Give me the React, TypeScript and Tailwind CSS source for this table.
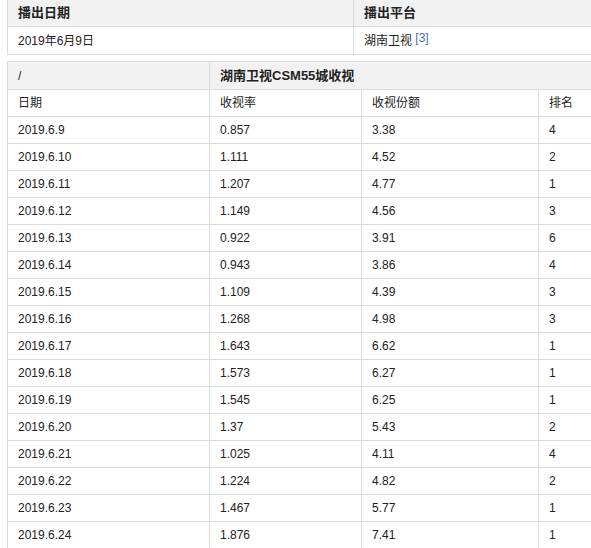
import React from 'react';

const rows: [string, string, string, string][] = [
    ['2019.6.9', '0.857', '3.38', '4'],
    ['2019.6.10', '1.111', '4.52', '2'],
    ['2019.6.11', '1.207', '4.77', '1'],
    ['2019.6.12', '1.149', '4.56', '3'],
    ['2019.6.13', '0.922', '3.91', '6'],
    ['2019.6.14', '0.943', '3.86', '4'],
    ['2019.6.15', '1.109', '4.39', '3'],
    ['2019.6.16', '1.268', '4.98', '3'],
    ['2019.6.17', '1.643', '6.62', '1'],
    ['2019.6.18', '1.573', '6.27', '1'],
    ['2019.6.19', '1.545', '6.25', '1'],
    ['2019.6.20', '1.37', '5.43', '2'],
    ['2019.6.21', '1.025', '4.11', '4'],
    ['2019.6.22', '1.224', '4.82', '2'],
    ['2019.6.23', '1.467', '5.77', '1'],
    ['2019.6.24', '1.876', '7.41', '1'],
];

const cell = 'border border-[#dcdcdc] px-[10px] py-0 text-left align-middle';

export default function App() {
    return (
        <div
            className="w-[591px] h-[548px] overflow-hidden bg-white text-[12px] text-[#222]"
            style={{ fontFamily: '"Liberation Sans", Arial, "Noto Sans CJK SC", sans-serif' }}
        >
            {/* Broadcast info */}
            <table className="ml-[7px] mt-[-1px] w-[620px] table-fixed border-collapse">
                <colgroup>
                    <col className="w-[346px]" />
                    <col />
                </colgroup>
                <tbody>
                    <tr className="h-[27px] bg-[#f2f2f2]">
                        <th className={`${cell} font-bold text-[13px]`}>播出日期</th>
                        <th className={`${cell} font-bold text-[13px]`}>播出平台</th>
                    </tr>
                    <tr className="h-[28px]">
                        <td className={cell}>2019年6月9日</td>
                        <td className={cell}>
                            湖南卫视{' '}
                            <sup className="text-[12px] text-[#4a6fb5] relative top-[-3px]">[3]</sup>
                        </td>
                    </tr>
                </tbody>
            </table>

            {/* Ratings */}
            <table className="ml-[7px] mt-[6px] w-[620px] table-fixed border-collapse">
                <colgroup>
                    <col className="w-[202px]" />
                    <col className="w-[152px]" />
                    <col className="w-[177px]" />
                    <col />
                </colgroup>
                <tbody>
                    <tr className="h-[28px] bg-[#f2f2f2]">
                        <th className={`${cell} font-normal`}>/</th>
                        <th className={`${cell} font-bold text-[13px]`} colSpan={3}>湖南卫视CSM55城收视</th>
                    </tr>
                    <tr className="h-[27px]">
                        <td className={cell}>日期</td>
                        <td className={cell}>收视率</td>
                        <td className={cell}>收视份额</td>
                        <td className={cell}>排名</td>
                    </tr>
                    {rows.map((r, idx) => (
                        <tr key={idx} className="h-[27px]">
                            {r.map((v, j) => (
                                <td key={j} className={cell}>{v}</td>
                            ))}
                        </tr>
                    ))}
                </tbody>
            </table>
        </div>
    );
}
